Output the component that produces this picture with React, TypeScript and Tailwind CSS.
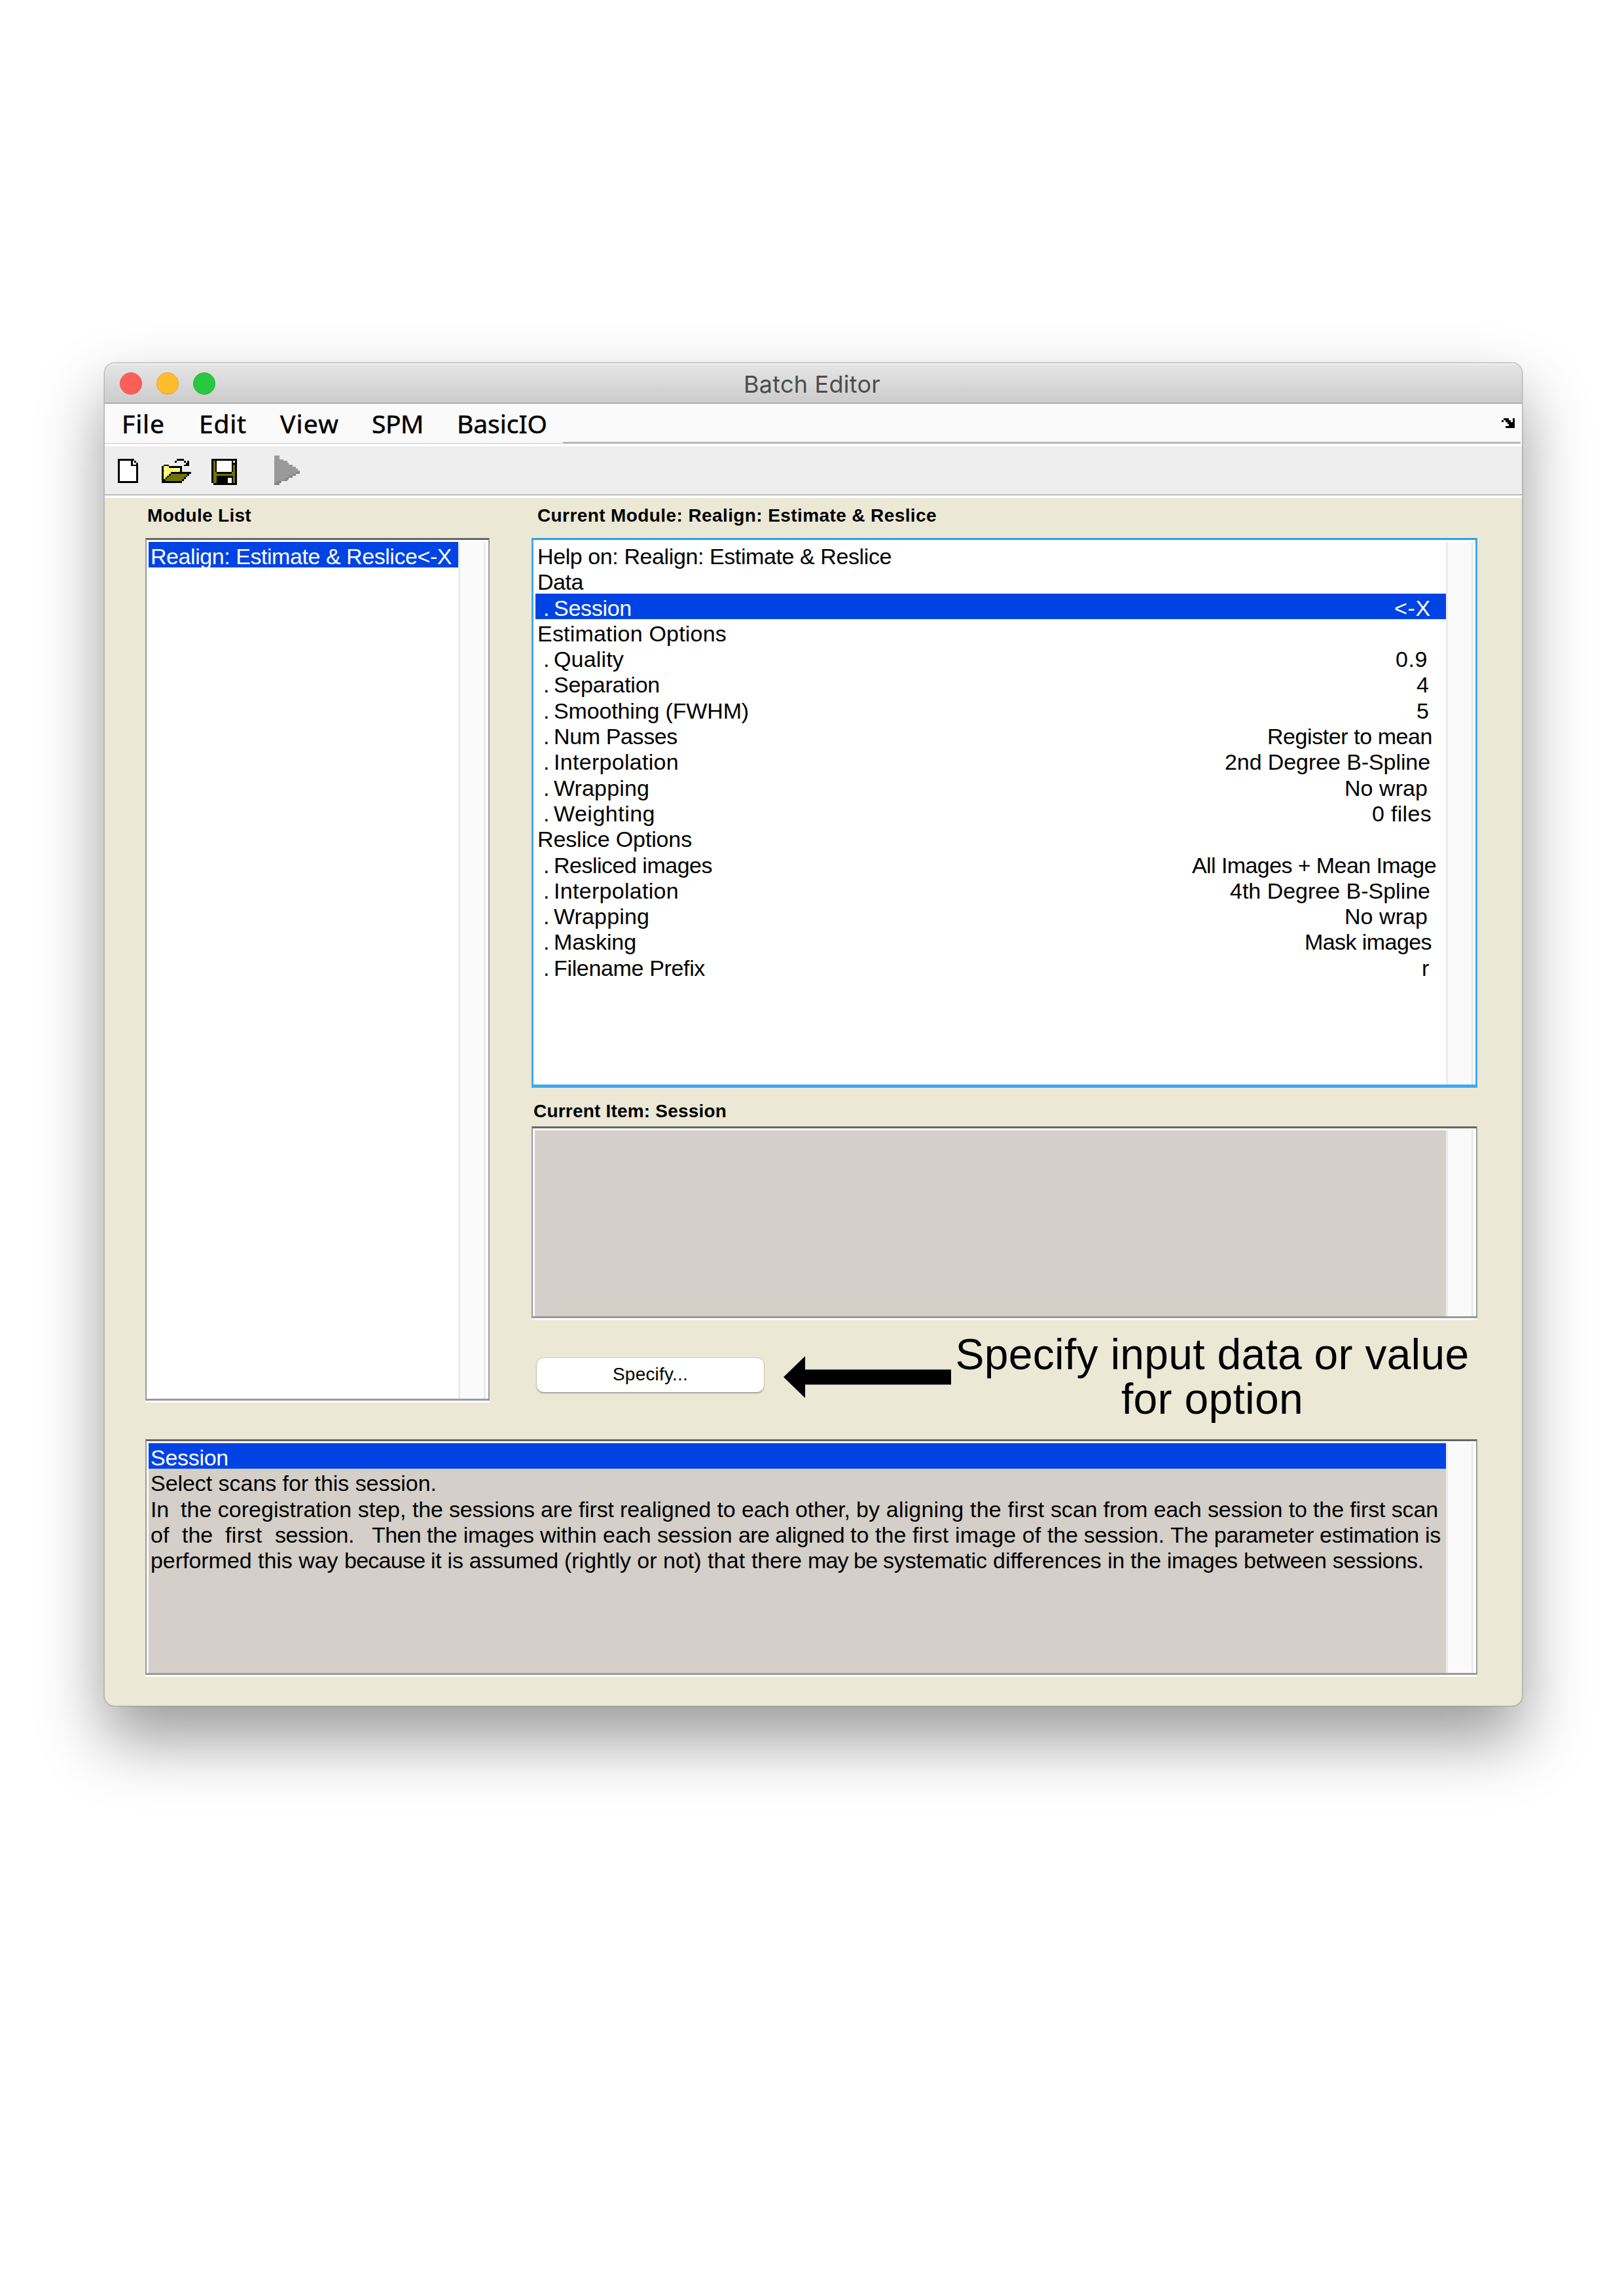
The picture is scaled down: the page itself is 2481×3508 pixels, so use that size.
import { useLayoutEffect, useRef, type ReactNode } from "react";

/** A run of text tracked so that it fills exactly `w` pixels. */
function Fit({ w, children, className = "" }: { w: number; children: string; className?: string }) {
  const ref = useRef<HTMLSpanElement>(null);
  useLayoutEffect(() => {
    const el = ref.current;
    if (!el) return;
    el.style.letterSpacing = "0px";
    const natural = el.getBoundingClientRect().width;
    el.style.letterSpacing = `${(w - natural) / children.length}px`;
  }, [w, children]);
  return (
    <span ref={ref} className={`inline-block whitespace-pre ${className}`}>
      {children}
    </span>
  );
}

const INK: Record<string, string> = {
  "#": "#000000",
  w: "#ffffff",
  y: "#ffff00",
  o: "#737300",
  g: "#999999",
  d: "#858585",
};

/** Small bitmap icon, one character per pixel. */
function PixelIcon({ rows, width, height, className = "" }: { rows: string[]; width: number; height: number; className?: string }) {
  const cols = Math.max(...rows.map((r) => r.length));
  return (
    <svg
      width={width}
      height={height}
      viewBox={`0 0 ${cols} ${rows.length}`}
      preserveAspectRatio="none"
      shapeRendering="crispEdges"
      className={`shrink-0 ${className}`}
    >
      {rows.flatMap((row, y) =>
        [...row].map((c, x) => {
          if (c === " ") return null;
          const ink = c === "y" && (x + y) % 2 === 0 ? "w" : c;
          return <rect key={`${x}-${y}`} x={x} y={y} width={1} height={1} fill={INK[ink]} />;
        }),
      )}
    </svg>
  );
}

const NEW_ICON = [
  "#########  ",
  "#wwwwww#w# ",
  "#wwwwww#ww#",
  "#wwwwww####",
  "#wwwwwwwww#",
  "#wwwwwwwww#",
  "#wwwwwwwww#",
  "#wwwwwwwww#",
  "#wwwwwwwww#",
  "#wwwwwwwww#",
  "#wwwwwwwww#",
  "#wwwwwwwww#",
  "###########",
];

const OPEN_ICON = [
  "        ####    ",
  "       #    # # ",
  "             ## ",
  " ###        ### ",
  "#yyy#######     ",
  "#yyyyyyyyy#     ",
  "#yyyyyyyyy#     ",
  "#yyyy###########",
  "#yyy#ooooooooo# ",
  "#yy#ooooooooo#  ",
  "#y#ooooooooo#   ",
  "##ooooooooo#    ",
  "###########     ",
];

const SAVE_ICON = [
  "##############",
  "#o#wwwwwwww#w#",
  "#o#wwwwwwww###",
  "#o#wwwwwwww#o#",
  "#o#wwwwwwww#o#",
  "#o#wwwwwwww#o#",
  "#o#wwwwwwww#o#",
  "#oo########oo#",
  "#oooooooooooo#",
  "#oo#########o#",
  "#oo######ww#o#",
  "#oo######ww#o#",
  "#oo######ww#o#",
  " #############",
];

const RUN_ICON = [
  "ggg           ",
  "ggg           ",
  "ggggg         ",
  "ggggggg       ",
  "gggggggg      ",
  "gggggggggg    ",
  "gggggggggggg  ",
  "ggggggggggggg ",
  "gggggggggggggg",
  "ggggggggggggdd",
  "ggggggggggdd  ",
  "ggggggggdd    ",
  "ggggggdd      ",
  "gggggdd       ",
  "gddd          ",
  "ddd           ",
];

const DOCK_ICON = [
  " ###  #",
  "# ### #",
  "   ####",
  "    ###",
  "  #####",
];

function Track() {
  return <div className="w-[42px] shrink-0 border-x-[3px] border-[#ebebeb] bg-[#fafafa]" />;
}

/** Sunken list panel with an empty scroll track on its right. */
function Panel({ className, fill, children }: { className: string; fill: string; children?: ReactNode }) {
  return (
    <div
      className={`flex border-x-[2px] border-t-[3px] border-b-[3px] border-[#9a9a9a] border-t-[#666666] bg-white pt-[3px] pr-[4px] pl-[3px] shadow-[0_3px_0_#ffffff] ${className}`}
    >
      <div className={`min-w-0 grow ${fill}`}>{children}</div>
      <Track />
    </div>
  );
}

type Item = { label: string; w: number; sub?: boolean; value?: string; vw?: number; end?: number; on?: boolean };

const ITEMS: Item[] = [
  { label: "Help on: Realign: Estimate & Reslice", w: 541 },
  { label: "Data", w: 70 },
  { label: "Session", w: 119, sub: true, value: "<-X", vw: 56, end: 23, on: true },
  { label: "Estimation Options", w: 289 },
  { label: "Quality", w: 107, sub: true, value: "0.9", vw: 49, end: 28 },
  { label: "Separation", w: 162, sub: true, value: "4", vw: 19, end: 26 },
  { label: "Smoothing (FWHM)", w: 298, sub: true, value: "5", vw: 19, end: 26 },
  { label: "Num Passes", w: 189, sub: true, value: "Register to mean", vw: 252, end: 21 },
  { label: "Interpolation", w: 191, sub: true, value: "2nd Degree B-Spline", vw: 314, end: 24 },
  { label: "Wrapping", w: 146, sub: true, value: "No wrap", vw: 127, end: 28 },
  { label: "Weighting", w: 155, sub: true, value: "0 files", vw: 91, end: 22 },
  { label: "Reslice Options", w: 236 },
  { label: "Resliced images", w: 242, sub: true, value: "All Images + Mean Image", vw: 373, end: 15 },
  { label: "Interpolation", w: 191, sub: true, value: "4th Degree B-Spline", vw: 306, end: 24 },
  { label: "Wrapping", w: 146, sub: true, value: "No wrap", vw: 127, end: 28 },
  { label: "Masking", w: 126, sub: true, value: "Mask images", vw: 194, end: 22 },
  { label: "Filename Prefix", w: 231, sub: true, value: "r", vw: 12, end: 25 },
];

const HELP: [string, number][][] = [
  [["Select scans for this session.", 437]],
  [
    ["In  ", 46],
    ["the coregistration step, ", 354],
    ["the sessions are first ", 317],
    ["realigned to ", 186],
    ["each other, ", 175],
    ["by aligning ", 174],
    ["the first ", 123],
    ["scan from each session to the first scan", 592],
  ],
  [
    ["of  ", 48],
    ["the  ", 66],
    ["first  ", 76],
    ["session.   ", 148],
    ["Then ", 84],
    ["the images ", 173],
    ["within each ", 179],
    ["session ", 124],
    ["are aligned ", 171],
    ["to the ", 95],
    ["first image of ", 206],
    ["the session. ", 188],
    ["The parameter estimation is", 413],
  ],
  [
    ["performed this way ", 296],
    ["because ", 132],
    ["it is assumed ", 204],
    ["(rightly or not) ", 219],
    ["that ", 67],
    ["there ", 86],
    ["may ", 70],
    ["be ", 45],
    ["systematic ", 168],
    ["differences ", 175],
    ["in the images ", 208],
    ["between sessions.", 275],
  ],
];

const MENUS: [string, number, string][] = [
  ["File", 66, "w-[118px]"],
  ["Edit", 73, "w-[124px]"],
  ["View", 90, "w-[140px]"],
  ["SPM", 79, "w-[130px]"],
  ["BasicIO", 138, "w-[150px]"],
];

const ROW = "flex h-[39.3px] pl-[3px] leading-[45px] whitespace-pre";

export default function App() {
  return (
    <div className="h-[3508px] w-[2481px] overflow-hidden bg-white pt-[554px] pl-[159px] font-['Liberation_Sans',Arial,sans-serif] text-[34px] text-black">
      <div className="flex h-[2053px] w-[2167px] flex-col overflow-hidden rounded-[16px] border border-[#b4b4b4] bg-[#ebe8d6] shadow-[0_50px_100px_rgba(0,0,0,0.4),0_0_2px_rgba(0,0,0,0.3)]">
        <div className="flex h-[62px] shrink-0 items-center border-t-2 border-b-2 border-t-[#f3f3f3] border-b-[#acacac] bg-linear-to-b from-[#e5e5e5] to-[#cccccc] pl-[23px]">
          <div className="flex gap-[22px]">
            <div className="size-[34px] rounded-full border border-[#e9534d] bg-[#ff5f57]" />
            <div className="size-[34px] rounded-full border border-[#e2a32f] bg-[#ffbd2e]" />
            <div className="size-[34px] rounded-full border border-[#21b038] bg-[#28c940]" />
          </div>
          <div className="ml-[807px] pt-[2px] font-['Inter',sans-serif] text-[36px] leading-[56px] text-[#4c4c4c]">
            <Fit w={209}>Batch Editor</Fit>
          </div>
        </div>

        <div className="flex h-[61px] shrink-0 bg-[#fafafa]">
          <div className="flex w-[700px] border-b border-[#c8c8c8] pl-[26px] font-['Noto_Sans',sans-serif] text-[39px] leading-[60px] [-webkit-text-stroke:0.5px_black]">
            {MENUS.map(([name, w, box]) => (
              <div key={name} className={`shrink-0 ${box}`}>
                <Fit w={w}>{name}</Fit>
              </div>
            ))}
          </div>
          <div className="mr-[2px] flex grow justify-end border-b-[3px] border-[#b8b8b8] pt-[22px] pr-[9px]">
            <PixelIcon rows={DOCK_ICON} width={20} height={15} />
          </div>
        </div>

        <div className="flex h-[83px] shrink-0 items-start border-t-4 border-b-4 border-white bg-[#eeeeee] shadow-[inset_0_-2px_0_#bcbcbc]">
          <PixelIcon rows={NEW_ICON} width={31} height={37} className="mt-[19px] ml-[20px]" />
          <PixelIcon rows={OPEN_ICON} width={45} height={37} className="mt-[19px] ml-[36px]" />
          <PixelIcon rows={SAVE_ICON} width={39} height={40} className="mt-[19px] ml-[31px]" />
          <PixelIcon rows={RUN_ICON} width={39} height={45} className="mt-[14px] ml-[57px]" />
        </div>

        <div className="flex shrink-0">
          <div className="ml-[62px] w-[526px]">
            <div className="h-[61px] pt-[9px] pl-[3px] text-[28px] leading-[36px] font-bold">
              <Fit w={159}>Module List</Fit>
            </div>
            <Panel className="h-[1318px]" fill="bg-white">
              <div className={`${ROW} bg-[#0043e4] text-white`}>
                <Fit w={460}>{"Realign: Estimate & Reslice<-X"}</Fit>
              </div>
            </Panel>
          </div>

          <div className="ml-[64px] w-[1445px]">
            <div className="h-[61px] pt-[9px] pl-[9px] text-[28px] leading-[36px] font-bold">
              <Fit w={610}>{"Current Module: Realign: Estimate & Reslice"}</Fit>
            </div>
            <div className="flex h-[840px] border-x-[3px] border-t-[3px] border-b-[5px] border-[#3fa9f2] border-t-[#2f9fe0] bg-white pt-[3px] pr-[3px] pl-[3px]">
              <div className="grow">
                {ITEMS.map((it, i) => (
                  <div key={i} className={`${ROW} ${it.on ? "bg-[#0043e4] text-white" : ""}`}>
                    {it.sub && <span className="w-[25px] shrink-0 pl-[9px]">.</span>}
                    <Fit w={it.w}>{it.label}</Fit>
                    {it.value && (
                      <div className="ml-auto" style={{ marginRight: it.end }}>
                        <Fit w={it.vw ?? 0}>{it.value}</Fit>
                      </div>
                    )}
                  </div>
                ))}
              </div>
              <Track />
            </div>

            <div className="h-[59px] pt-[18px] pl-[3px] text-[28px] leading-[36px] font-bold">
              <Fit w={295}>Current Item: Session</Fit>
            </div>
            <Panel className="h-[293px]" fill="bg-[#d4cfc8]" />

            <div className="flex h-[185px] pl-[8px]">
              <button className="mt-[61px] h-[52px] w-[347px] shrink-0 rounded-[10px] bg-white text-center text-[28px] leading-[51px] shadow-[0_0_2px_rgba(0,0,0,0.35),0_2px_2px_rgba(0,0,0,0.25)]">
                <Fit w={115} className="-translate-y-[2px]">
                  Specify...
                </Fit>
              </button>
              <svg width="256" height="64" viewBox="0 0 256 64" className="mt-[58px] ml-[30px] shrink-0">
                <path d="M0 32 33 0V20.500H256V43.500H33V64Z" />
              </svg>
              <div className="mt-[21px] ml-[5px] w-[788px] shrink-0 text-center text-[66px] leading-[68px]">
                <div>
                  <Fit w={785}>Specify input data or value</Fit>
                </div>
                <div>
                  <Fit w={278}>for option</Fit>
                </div>
              </div>
            </div>
          </div>
        </div>

        <Panel className="ml-[62px] h-[360px] w-[2035px] shrink-0" fill="bg-[#d4cfc8]">
          <div className={`${ROW} bg-[#0043e4] text-white`}>
            <Fit w={119}>Session</Fit>
          </div>
          {HELP.map((line, i) => (
            <div key={i} className={ROW}>
              {line.map(([text, w], j) => (
                <Fit key={j} w={w}>
                  {text}
                </Fit>
              ))}
            </div>
          ))}
        </Panel>
      </div>
    </div>
  );
}
